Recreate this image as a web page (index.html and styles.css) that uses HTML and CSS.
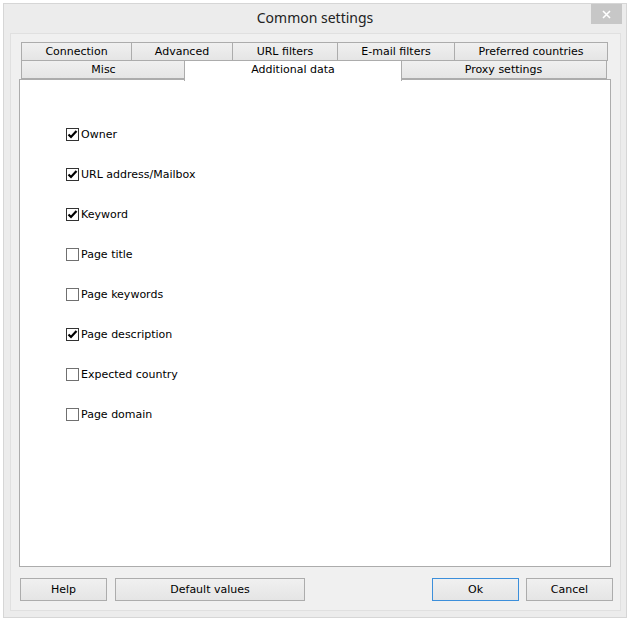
FILE: index.html
```html
<!DOCTYPE html>
<html lang="en">
<head>
    <meta charset="UTF-8">
    <title>Common settings</title>
    <link rel="stylesheet" href="styles.css">
</head>
<body>
    <div class="window">
        <div class="title-bar">
            <span></span>
            <div class="title">Common settings</div>
            <button class="close-button" aria-label="Close">
                <svg width="9" height="9" viewBox="0 0 9 9"><path d="M1 1 L8 8 M8 1 L1 8" stroke="#fff" stroke-width="1.6"/></svg>
            </button>
        </div>

        <div class="frame">
            <div class="tabs">
                <div class="tab-row">
                    <div class="tab" style="width: 111px">Connection</div>
                    <div class="tab" style="width: 102px">Advanced</div>
                    <div class="tab" style="width: 106px">URL filters</div>
                    <div class="tab" style="width: 118px">E-mail filters</div>
                    <div class="tab" style="width: 154px">Preferred countries</div>
                </div>
                <div class="tab-row">
                    <div class="tab" style="width: 165px">Misc</div>
                    <div class="tab selected" style="width: 218px">Additional data</div>
                    <div class="tab" style="width: 207px">Proxy settings</div>
                </div>
            </div>

            <div class="panel">
                <ul class="check-list">
                    <li class="check-item checked"><span class="box"></span>Owner</li>
                    <li class="check-item checked"><span class="box"></span>URL address/Mailbox</li>
                    <li class="check-item checked"><span class="box"></span>Keyword</li>
                    <li class="check-item"><span class="box"></span>Page title</li>
                    <li class="check-item"><span class="box"></span>Page keywords</li>
                    <li class="check-item checked"><span class="box"></span>Page description</li>
                    <li class="check-item"><span class="box"></span>Expected country</li>
                    <li class="check-item"><span class="box"></span>Page domain</li>
                </ul>
            </div>

            <div class="button-bar">
                <div class="button-group">
                    <button class="button">Help</button>
                    <button class="button wide">Default values</button>
                </div>
                <div class="button-group">
                    <button class="button default">Ok</button>
                    <button class="button">Cancel</button>
                </div>
            </div>
        </div>
    </div>
</body>
</html>
```

FILE: styles.css
```css
:root {
    --border-color: #acacac;
    --face-top: #f0f0f0;
    --face-bottom: #e5e5e5;
    --text-color: #000000;
}

* {
    margin: 0;
    padding: 0;
    box-sizing: border-box;
}

body {
    background: #ffffff;
    padding: 3px;
    font-family: "DejaVu Sans", Verdana, sans-serif;
    font-size: 11px;
    color: var(--text-color);
}

.window {
    width: 624px;
    height: 615px;
    border: 1px solid #d6d6d6;
    background: #ececec;
    display: flex;
    flex-direction: column;
}

.title-bar {
    height: 29px;
    flex-shrink: 0;
    display: grid;
    grid-template-columns: 1fr auto 1fr;
}

.title {
    font-family: "Noto Sans", "Open Sans", sans-serif;
    font-size: 14px;
    color: #222;
    padding-top: 4px;
}

.close-button {
    justify-self: end;
    width: 31px;
    height: 20px;
    margin-right: 4px;
    border: none;
    background: #c7c7c7;
    display: flex;
    align-items: center;
    justify-content: center;
}

.frame {
    flex: 1;
    margin: 0 5px 6px 6px;
    border: 1px solid #e0e0e0;
    background: #f0f0f0;
    padding: 8px 9px 9px 8px;
    display: flex;
    flex-direction: column;
}

.tabs {
    padding: 0 3px 0 2px;
    position: relative;
    z-index: 1;
}

.tab-row {
    display: flex;
}

.tab {
    height: 19px;
    margin-right: -1px;
    border: 1px solid var(--border-color);
    background: linear-gradient(var(--face-top), var(--face-bottom));
    text-align: center;
    line-height: 18px;
    color: #000;
}

.tab-row + .tab-row .tab {
    margin-top: -1px;
}

.tab.selected {
    height: 21px;
    margin-top: -2px;
    margin-left: -1px;
    margin-right: -2px;
    border-bottom: none;
    background: #ffffff;
    line-height: 17px;
    position: relative;
    z-index: 2;
}

.panel {
    height: 488px;
    margin-top: -2px;
    border: 1px solid var(--border-color);
    background: #ffffff;
    padding: 48px 0 0 46px;
}

.check-list {
    list-style: none;
    display: flex;
    flex-direction: column;
    gap: 27px;
}

.check-item {
    display: flex;
    align-items: center;
    height: 13px;
    gap: 2px;
}

.box {
    width: 13px;
    height: 13px;
    border: 1px solid #707070;
    background: #ffffff;
}

.check-item.checked .box {
    border-color: #333;
    background: #fff url("data:image/svg+xml,%3Csvg xmlns='http://www.w3.org/2000/svg' width='11' height='11' viewBox='0 0 11 11'%3E%3Cpath d='M1.5 5.5 L4 8 L9.5 2' fill='none' stroke='%23000' stroke-width='2.2'/%3E%3C/svg%3E") center / 11px 11px no-repeat;
}

.button-bar {
    margin-top: 11px;
    padding: 0 0 0 1px;
    display: flex;
    justify-content: space-between;
    margin-right: -2px;
}

.button-group {
    display: flex;
    gap: 8px;
}

.button-group + .button-group {
    gap: 7px;
}

.button {
    width: 87px;
    height: 23px;
    border: 1px solid var(--border-color);
    background: linear-gradient(var(--face-top), var(--face-bottom));
    font-family: inherit;
    font-size: 11px;
    color: #000;
}

.button.wide {
    width: 190px;
}

.button.default {
    border-color: #3c8fdb;
}
```
